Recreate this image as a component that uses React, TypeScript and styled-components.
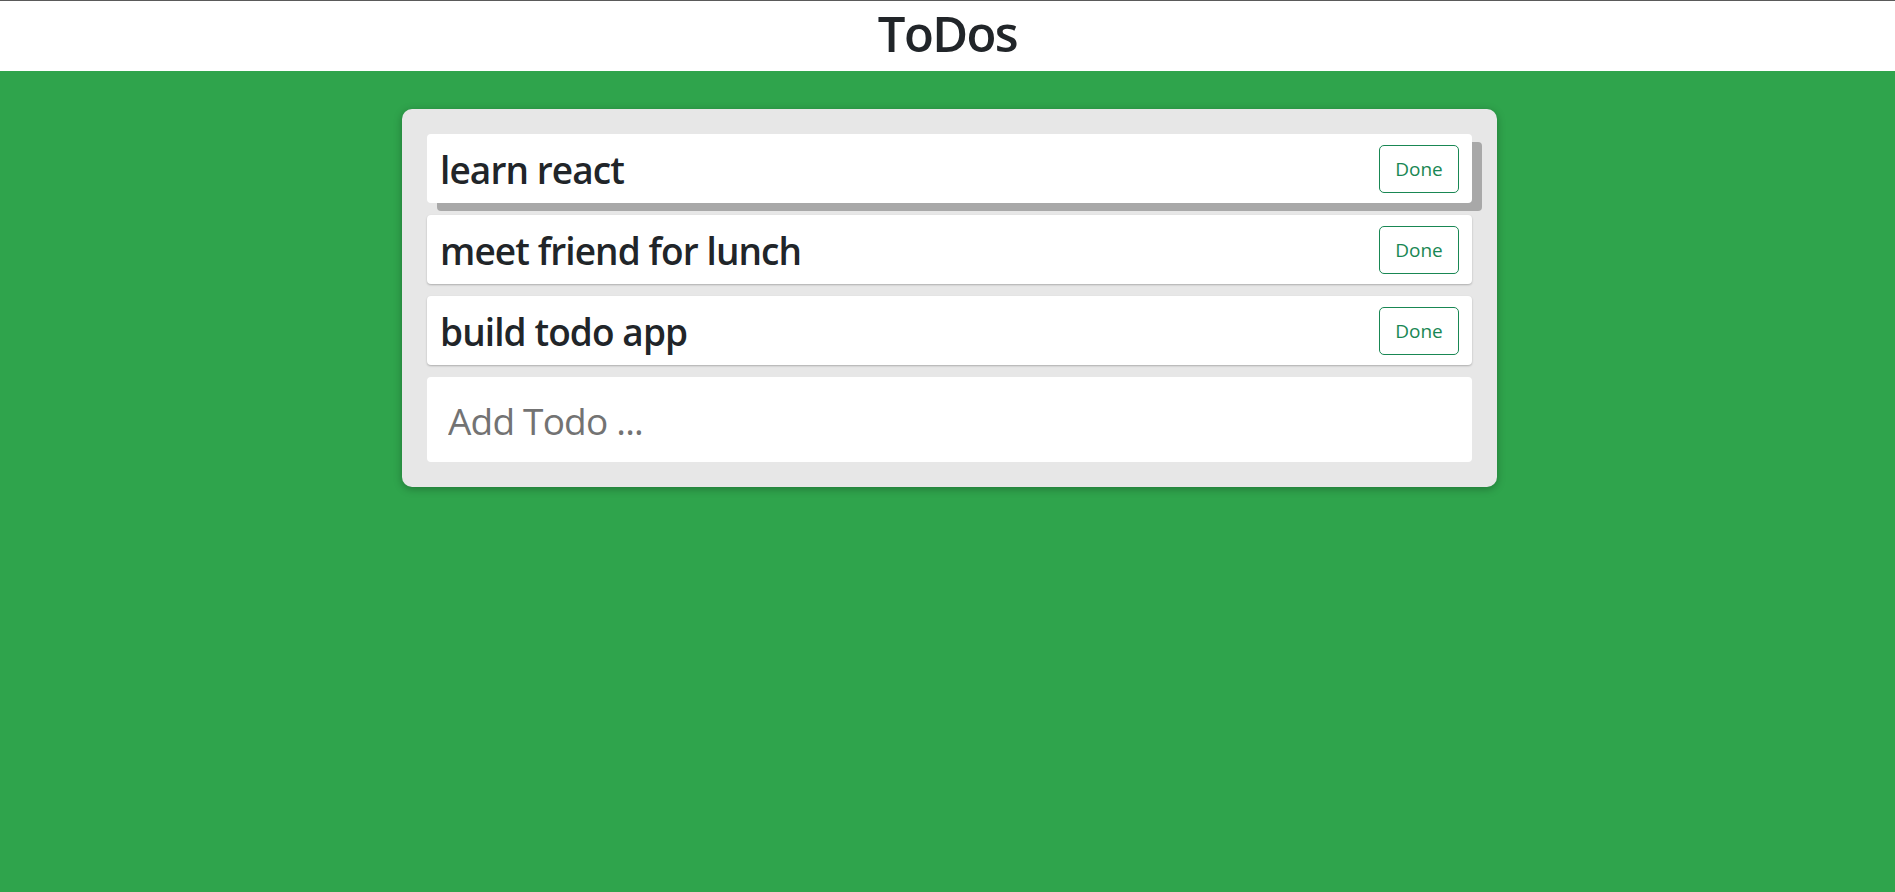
import React from "react";
import styled, { createGlobalStyle } from "styled-components";

const Global = createGlobalStyle`
  html, body { margin: 0; padding: 0; }
  body {
    font-family: "Open Sans", "Noto Sans", "Liberation Sans", sans-serif;
    color: #212529;
    background: #2fa44c;
  }
  * { box-sizing: border-box; }
`;

const Header = styled.header`
  height: 71px;
  background: #ffffff;
  border-top: 1px solid #5a5a5a;
  display: flex;
  align-items: center;
  justify-content: center;
`;

const Title = styled.h1`
  margin: 0 0 5px 0;
  font-size: 49px;
  font-weight: 600;
  line-height: 1.2;
  letter-spacing: -1.6px;
  color: #212529;
`;

const Main = styled.main`
  min-height: calc(100vh - 71px);
  background: #2fa44c;
  padding: 38px 0 0 4px;
`;

const Card = styled.section`
  width: 1095px;
  margin: 0 auto;
  background: #e7e7e7;
  border-radius: 10px;
  padding: 25px;
  box-shadow: 0 2px 8px rgba(0, 0, 0, 0.28);
  display: flex;
  flex-direction: column;
  gap: 12px;
`;

const Item = styled.div<{ $lifted?: boolean }>`
  height: 69px;
  background: #ffffff;
  border-radius: 4px;
  display: flex;
  align-items: center;
  justify-content: space-between;
  padding: 0 13px 0 13px;
  box-shadow: ${(p) =>
    p.$lifted ? "10px 8px 0 #a8a8a8" : "0 1px 2px rgba(0, 0, 0, 0.25)"};
`;

const ItemText = styled.h2`
  margin: 0;
  padding-top: 3px;
  font-size: 37px;
  font-weight: 600;
  line-height: 1.2;
  letter-spacing: -0.9px;
  color: #212529;
`;

const DoneButton = styled.button`
  width: 80px;
  height: 48px;
  background: #ffffff;
  border: 1px solid #198754;
  border-radius: 5px;
  color: #198754;
  font-family: "Open Sans", "Noto Sans", sans-serif;
  font-size: 19px;
  font-weight: 400;
  padding: 0;
  cursor: pointer;
`;

const AddInput = styled.input`
  height: 85px;
  width: 100%;
  border: none;
  border-radius: 4px;
  background: #ffffff;
  padding: 2px 21px 0;
  font-family: "Open Sans", "Noto Sans", sans-serif;
  font-size: 37px;
  color: #212529;
  outline: none;
  &::placeholder {
    color: #737373;
    letter-spacing: -0.8px;
  }
`;

const todos = ["learn react", "meet friend for lunch", "build todo app"];

export default function App() {
  return (
    <>
      <Global />
      <Header>
        <Title>ToDos</Title>
      </Header>
      <Main>
        <Card>
          {todos.map((t, i) => (
            <Item key={t} $lifted={i === 0}>
              <ItemText>{t}</ItemText>
              <DoneButton>Done</DoneButton>
            </Item>
          ))}
          <AddInput placeholder="Add Todo ..." />
        </Card>
      </Main>
    </>
  );
}
